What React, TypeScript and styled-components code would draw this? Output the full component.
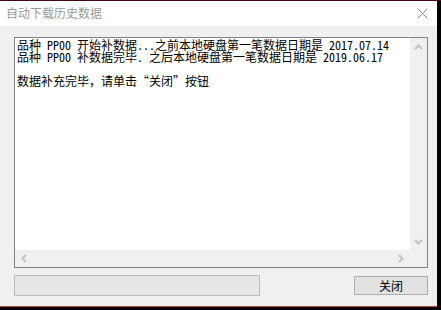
import React from "react";
import styled, { createGlobalStyle } from "styled-components";

const lines = [
  "品种 PP00 开始补数据...之前本地硬盘第一笔数据日期是 2017.07.14",
  "品种 PP00 补数据完毕. 之后本地硬盘第一笔数据日期是 2019.06.17",
  "",
  "数据补充完毕，请单击“关闭”按钮",
];

const GlobalStyle = createGlobalStyle`
  html, body {
    margin: 0;
    padding: 0;
    background: #000;
  }
  body {
    font-family: "Noto Sans Mono CJK SC", "Noto Sans CJK SC", monospace;
    font-size: 12px;
  }
`;

const Chevron: React.FC<{ dir: "up" | "down" | "left" | "right" }> = ({ dir }) => {
  const pts = {
    up: "1,6 4.5,2.5 8,6",
    down: "1,3 4.5,6.5 8,3",
    left: "6,1 2.5,4.5 6,8",
    right: "3,1 6.5,4.5 3,8",
  }[dir];
  return (
    <svg width="9" height="9" viewBox="0 0 9 9">
      <polyline points={pts} fill="none" stroke="#c2c2c2" strokeWidth="2" />
    </svg>
  );
};

const App: React.FC<{}> = () => {
  return (
    <>
      <GlobalStyle />
      <Screen>
        <Dialog>
          <TitleBar>
            <Title>自动下载历史数据</Title>
            <CloseIcon>
              <svg width="11" height="11" viewBox="0 0 11 11">
                <path d="M0.5 0.5 L10.5 10.5 M10.5 0.5 L0.5 10.5" stroke="#8a8a8a" strokeWidth="1" />
              </svg>
            </CloseIcon>
          </TitleBar>
          <Body>
            <LogBox>
              <LogMain>
                <LogText>
                  {lines.map((l, i) => (
                    <Line key={i}>{l || "\u00a0"}</Line>
                  ))}
                </LogText>
                <VScroll>
                  <Chevron dir="up" />
                  <Chevron dir="down" />
                </VScroll>
              </LogMain>
              <HScrollRow>
                <HScroll>
                  <Chevron dir="left" />
                  <Chevron dir="right" />
                </HScroll>
                <Corner />
              </HScrollRow>
            </LogBox>
            <Footer>
              <Progress />
              <Button>关闭</Button>
            </Footer>
          </Body>
        </Dialog>
      </Screen>
    </>
  );
};

const Screen = styled.div`
  width: 441px;
  height: 310px;
  overflow: hidden;
  background: #000;
  border-top: 1px solid #3a0c0c;
  box-sizing: border-box;
`;

const Dialog = styled.div`
  width: 437px;
  height: 306px;
  display: flex;
  flex-direction: column;
  background: #f0f0f0;
  border-bottom: 1px solid #b04040;
  margin-top: -1px;
`;

const TitleBar = styled.div`
  height: 26px;
  flex-shrink: 0;
  background: #fff;
  display: flex;
  align-items: center;
  justify-content: space-between;
  padding: 0 9px 0 6px;
`;

const Title = styled.div`
  color: #9a9a9a;
  font-size: 12px;
  line-height: 12px;
`;

const CloseIcon = styled.div`
  width: 11px;
  height: 11px;
  display: flex;
`;

const Body = styled.div`
  flex: 1;
  display: flex;
  flex-direction: column;
  padding: 11px 9px 0 14px;
`;

const LogBox = styled.div`
  height: 231px;
  display: flex;
  flex-direction: column;
  border: 1px solid #828282;
  background: #fff;
  box-sizing: border-box;
`;

const LogMain = styled.div`
  flex: 1;
  display: flex;
  min-height: 0;
`;

const LogText = styled.div`
  flex: 1;
  padding: 1px 0 0 2px;
  color: #000;
`;

const Line = styled.div`
  height: 12px;
  line-height: 12px;
  white-space: pre;
  font-size: 12px;
`;

const VScroll = styled.div`
  width: 17px;
  background: #f0f0f0;
  display: flex;
  flex-direction: column;
  justify-content: space-between;
  align-items: center;
  padding: 5px 0 4px;
`;

const HScrollRow = styled.div`
  height: 17px;
  display: flex;
`;

const HScroll = styled.div`
  flex: 1;
  background: #f0f0f0;
  display: flex;
  align-items: center;
  justify-content: space-between;
  padding: 0 5px 0 5px;
`;

const Corner = styled.div`
  width: 17px;
  background: #f0f0f0;
`;

const Footer = styled.div`
  display: flex;
  justify-content: space-between;
  align-items: flex-start;
  margin-top: 7px;
`;

const Progress = styled.div`
  width: 246px;
  height: 21px;
  box-sizing: border-box;
  background: #e6e6e6;
  border: 1px solid #bcbcbc;
`;

const Button = styled.div`
  width: 74px;
  height: 19px;
  margin-top: 1px;
  box-sizing: border-box;
  background: #e1e1e1;
  border: 1px solid #adadad;
  display: flex;
  align-items: center;
  justify-content: center;
  font-size: 12px;
  color: #000;
`;

export default App;
